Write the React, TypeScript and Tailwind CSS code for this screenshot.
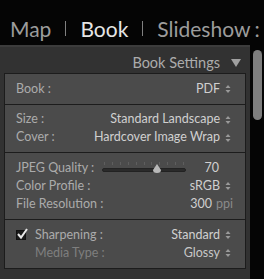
import React from "react";

const Spin = () => (
  <svg width="6" height="10" viewBox="0 0 6 10" className="ml-[5px] shrink-0">
    <path d="M0.5 4 L3 1 L5.5 4 Z" fill="#9a9a9a" />
    <path d="M0.5 6 L3 9 L5.5 6 Z" fill="#9a9a9a" />
  </svg>
);

const Row = ({
  label,
  value,
  spin = true,
  dim = false,
  check = false,
  suffix,
}: {
  label: string;
  value: string;
  spin?: boolean;
  dim?: boolean;
  check?: boolean;
  suffix?: string;
}) => (
  <div className="flex items-center h-[18px]">
    {check && (
      <div className="w-[10px] h-[10px] bg-[#1a1a1a] border border-[#111] mr-[9px] relative">
        <svg width="12" height="12" viewBox="0 0 12 12" className="absolute left-[-1px] top-[-3px]">
          <path d="M2 6 L5 9.5 L11 1" stroke="#e8e8e8" strokeWidth="2" fill="none" />
        </svg>
      </div>
    )}
    <span className={dim ? "text-[#7f7f7f]" : "text-[#ababab]"}>{label}</span>
    <span className="flex-1" />
    <span className={dim ? "text-[#c8c8c8]" : "text-[#d0d0d0]"}>{value}</span>
    {suffix && <span className="text-[#8a8a8a] ml-[4px]">{suffix}</span>}
    {spin && <Spin />}
    {!spin && !suffix && <span className="w-[11px]" />}
  </div>
);

const Divider = () => <div className="mx-[14px] w-px h-[15px] bg-[#808080] mb-[3px] shrink-0" />;

export default function App() {
  return (
    <div
      className="w-[264px] h-[279px] bg-[#050505] overflow-hidden flex flex-col"
      style={{ fontFamily: "Lato, 'Open Sans', sans-serif" }}
    >
      <div className="h-[45px] flex items-end pb-[6px] pl-[10px] text-[21px] leading-none text-[#9c9c9c] whitespace-nowrap">
        <span>Map</span>
        <Divider />
        <span className="text-[#e6e6e6]">Book</span>
        <Divider />
        <span>Slideshow</span>
        <span className="ml-[4px]">:</span>
      </div>
      <div className="h-[2px] w-[250px] bg-[#3c3c3c]" />
      <div className="flex flex-1">
        <div className="w-[250px] bg-[#323232] flex flex-col">
          <div className="h-[26px] flex items-end justify-end pr-[9px] pb-[3px] text-[14.5px] leading-none text-[#acacac]">
            <span>Book Settings</span>
            <svg width="10" height="8" viewBox="0 0 10 8" className="ml-[11px] mb-[3px]">
              <path d="M0 0 H10 L5 8 Z" fill="#a0a0a0" />
            </svg>
          </div>
          <div className="ml-[4px] w-[242px] text-[12.5px] leading-none">
            <div className="bg-[#4b4b4b] border border-[#1c1c1c] h-[32px] pl-[11px] pr-[14px] flex flex-col justify-center">
              <Row label="Book :" value="PDF" />
            </div>
            <div className="bg-[#4b4b4b] border border-t-0 border-[#1c1c1c] h-[48px] pl-[11px] pr-[14px] flex flex-col justify-center">
              <Row label="Size :" value="Standard Landscape" />
              <Row label="Cover :" value="Hardcover Image Wrap" />
            </div>
            <div className="bg-[#4b4b4b] border border-t-0 border-[#1c1c1c] h-[67px] pl-[11px] pr-[12px] flex flex-col justify-center">
              <div className="flex items-center h-[18px]">
                <span className="text-[#ababab]">JPEG Quality :</span>
                <div className="relative ml-[8px] w-[84px] h-[14px]">
                  <div className="absolute left-[2px] right-[2px] top-[1px] flex justify-between">
                    {Array.from({ length: 11 }).map((_, i) => (
                      <span key={i} className="w-px h-[3px] bg-[#5e5e5e]" />
                    ))}
                  </div>
                  <div className="absolute left-0 right-0 top-[7px] h-[4px] rounded-full bg-[#2a2a2a] border border-[#222]" />
                  <svg width="10" height="10" viewBox="0 0 10 10" className="absolute left-[50px] top-[3px]">
                    <path d="M5 0 L9 6 Q9 9 5 9 Q1 9 1 6 Z" fill="#b8b8b8" />
                  </svg>
                </div>
                <span className="flex-1" />
                <span className="text-[#d0d0d0] mr-[14px]">70</span>
              </div>
              <div className="pr-[2px]">
                <Row label="Color Profile :" value="sRGB" />
              </div>
              <Row label="File Resolution :" value="300" spin={false} suffix="ppi" />
            </div>
            <div className="bg-[#4b4b4b] border border-t-0 border-[#1c1c1c] h-[49px] pl-[11px] pr-[14px] flex flex-col justify-center">
              <Row label="Sharpening :" value="Standard" check />
              <div className="pl-[19px]">
                <Row label="Media Type :" value="Glossy" dim />
              </div>
            </div>
          </div>
        </div>
        <div className="w-[14px] bg-[#050505] pl-[3px] pt-[3px]">
          <div className="w-[9px] h-[70px] rounded-full bg-[#7e7e7e]" />
        </div>
      </div>
    </div>
  );
}
